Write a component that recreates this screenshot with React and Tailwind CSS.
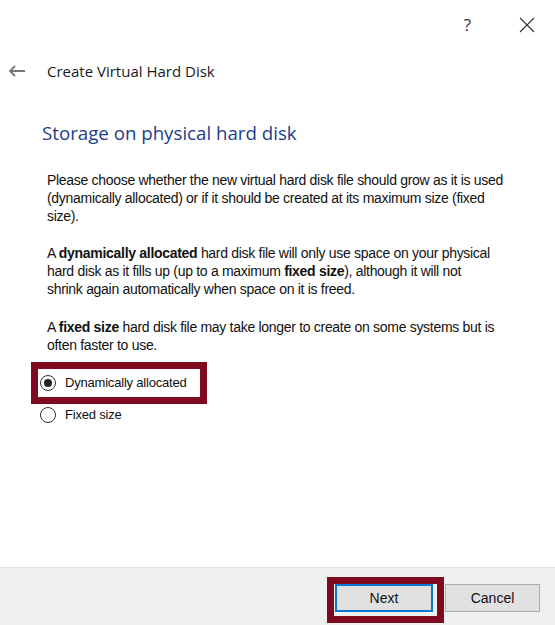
import React, { useState } from 'react';

const App = () => {
  const [mode, setMode] = useState('dynamic');

  return (
    <div className="w-[555px] h-[625px] bg-white flex flex-col overflow-hidden" style={{ fontFamily: '"Liberation Sans", Arial, sans-serif' }}>
      {/* title bar */}
      <div className="h-[48px] flex items-center justify-end pr-[20px]">
        <span className="text-[17px] text-[#333] mr-[48px] mt-[2px]" style={{ fontFamily: '"Open Sans", sans-serif' }}>?</span>
        <svg width="16" height="16" viewBox="0 0 16 16" className="mt-[2px]">
          <path d="M1 1 L15 15 M15 1 L1 15" stroke="#333" strokeWidth="1.1" fill="none" />
        </svg>
      </div>

      {/* header */}
      <div className="h-[46px] flex items-center pl-[8px]">
        <svg width="18" height="12" viewBox="0 0 18 12">
          <path d="M17 6 H2 M7 1 L2 6 L7 11" stroke="#777" strokeWidth="1.8" fill="none" />
        </svg>
        <span className="ml-[21px] text-[15px] text-[#1a1a1a]" style={{ fontFamily: '"Open Sans", sans-serif' }}>Create Virtual Hard Disk</span>
      </div>

      {/* content */}
      <div className="flex-1 pl-[42px] pr-[10px]">
        <h1 className="mt-[25px] text-[18.7px] text-[#1e3c8c] leading-[28px]" style={{ fontFamily: '"Open Sans", sans-serif' }}>
          Storage on physical hard disk
        </h1>

        <div className="pl-[5px] text-[14px] tracking-[-0.3px] leading-[18px] text-[#111] mt-[24px] whitespace-nowrap">
          <p>
            Please choose whether the new virtual hard disk file should grow as it is used<br />
            (dynamically allocated) or if it should be created at its maximum size (fixed<br />
            size).
          </p>
          <p className="mt-[19px]">
            A <b>dynamically allocated</b> hard disk file will only use space on your physical<br />
            hard disk as it fills up (up to a maximum <b>fixed size</b>), although it will not<br />
            shrink again automatically when space on it is freed.
          </p>
          <p className="mt-[20px]">
            A <b>fixed size</b> hard disk file may take longer to create on some systems but is<br />
            often faster to use.
          </p>
        </div>

        <div className="mt-[15px] flex flex-col gap-[4px] -ml-[4px]">
          <label className="w-[162px] h-[28px] flex items-center gap-[9px] pl-[2px] outline-[7px] outline-solid outline-[#7e0a1f] cursor-pointer text-[13px] tracking-[-0.2px] whitespace-nowrap text-[#111]">
            <input type="radio" className="hidden" checked={mode === 'dynamic'} onChange={() => setMode('dynamic')} />
            <span className="w-[16px] h-[16px] shrink-0 rounded-full border border-[#333] flex items-center justify-center">
              {mode === 'dynamic' && <span className="w-[8px] h-[8px] rounded-full bg-[#222]" />}
            </span>
            Dynamically allocated
          </label>
          <label className="h-[28px] flex items-center gap-[9px] pl-[2px] cursor-pointer text-[13px] tracking-[-0.2px] whitespace-nowrap text-[#111]">
            <input type="radio" className="hidden" checked={mode === 'fixed'} onChange={() => setMode('fixed')} />
            <span className="w-[16px] h-[16px] shrink-0 rounded-full border border-[#333] flex items-center justify-center">
              {mode === 'fixed' && <span className="w-[8px] h-[8px] rounded-full bg-[#222]" />}
            </span>
            Fixed size
          </label>
        </div>
      </div>

      {/* footer */}
      <div className="h-[58px] bg-[#f0f0f0] border-t border-[#dfdfdf] flex items-end justify-end pr-[15px] pb-[2px]">
        <div className="border-[7px] border-[#7e0a1f] pl-[1px] pr-[4px] pb-[4px]">
          <button className="w-[98px] h-[28px] bg-[#e1e1e1] border-2 border-[#0078d7] text-[14px] text-[#111]">
            Next
          </button>
        </div>
        <button className="ml-[1px] mb-[11px] w-[95px] h-[28px] bg-[#e1e1e1] border border-[#adadad] text-[14px] text-[#111]">
          Cancel
        </button>
      </div>
    </div>
  );
};

export default App;
